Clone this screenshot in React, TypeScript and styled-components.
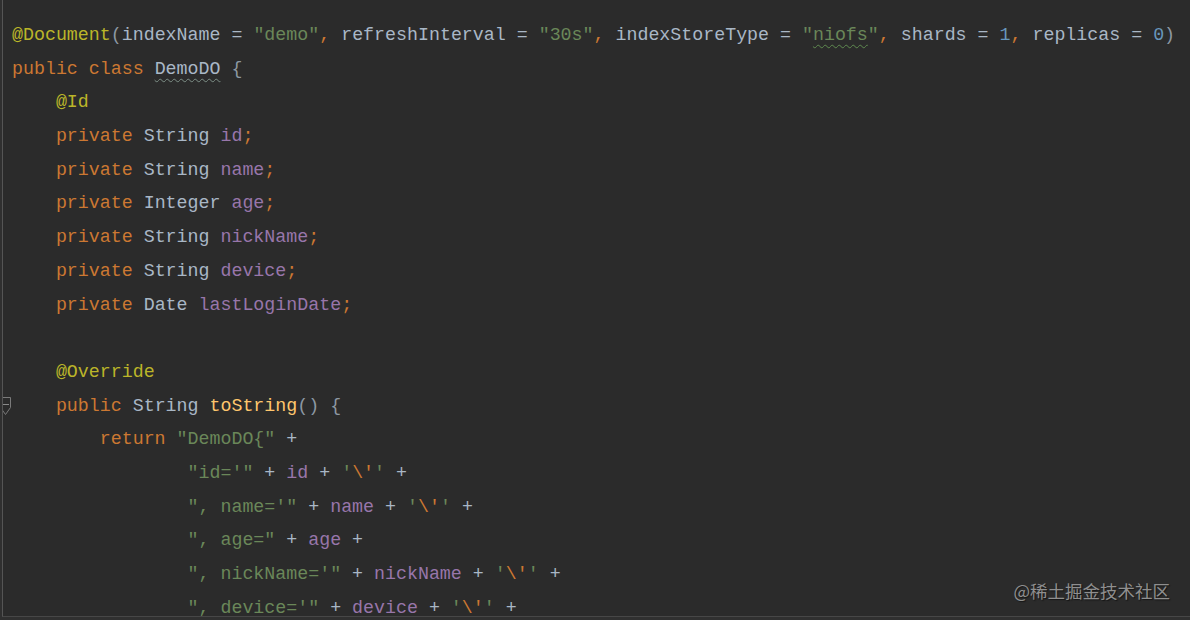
import React from "react";
import styled, { createGlobalStyle } from "styled-components";

const GlobalStyle = createGlobalStyle`
  html, body {
    margin: 0;
    padding: 0;
    background: #303030;
    overflow: hidden;
  }
`;

type Kind =
  | "plain"
  | "kw"
  | "ann"
  | "str"
  | "field"
  | "num"
  | "method"
  | "punct"
  | "dim";

const colors: Record<Kind, string> = {
  plain: "#a9b7c6",
  kw: "#cc7832",
  ann: "#bbb529",
  str: "#6a8759",
  field: "#9876aa",
  num: "#6897bb",
  method: "#ffc66d",
  punct: "#cc7832",
  dim: "#8d98a3",
};

const Page = styled.div`
  width: 1190px;
  height: 620px;
  background: #303030;
  position: relative;
`;

const Editor = styled.div`
  margin-left: 2px;
  height: 617px;
  border-left: 1px solid #555555;
  border-bottom: 1px solid #474747;
  background: #2b2b2b;
  overflow: hidden;
  padding: 19px 0 0 9px;
  box-sizing: border-box;
`;

const Line = styled.div`
  position: relative;
  height: 33.7px;
  line-height: 33.7px;
  white-space: pre;
  font-family: "Liberation Mono", monospace;
  font-size: 18.3px;
  color: #a9b7c6;
`;

const Token = styled.span<{ $kind: Kind; $squiggle?: string }>`
  color: ${(p) => colors[p.$kind]};
  ${(p) =>
    p.$squiggle
      ? `text-decoration: underline wavy ${p.$squiggle}; text-decoration-thickness: 1px; text-underline-offset: 4px;`
      : ""}
`;

const FoldMarker = styled.svg`
  position: absolute;
  left: -12px;
  top: 6px;
  width: 12px;
  height: 21px;
`;

const Watermark = styled.div`
  position: absolute;
  right: 20px;
  bottom: 17px;
  font-family: "Noto Sans CJK SC", "Noto Sans", sans-serif;
  font-size: 17.5px;
  color: #8f8f8f;
  text-shadow: 1px 1px 1px #151515;
`;

type Tok = [Kind, string, string?];

const I4 = "    ";
const I8 = "        ";
const I16 = "                ";

const lines: Tok[][] = [
  [
    ["ann", "@Document"],
    ["dim", "("],
    ["plain", "indexName = "],
    ["str", "\"demo\""],
    ["punct", ", "],
    ["plain", "refreshInterval = "],
    ["str", "\"30s\""],
    ["punct", ", "],
    ["plain", "indexStoreType = "],
    ["str", "\""],
    ["str", "niofs", "#5f8a4f"],
    ["str", "\""],
    ["punct", ", "],
    ["plain", "shards = "],
    ["num", "1"],
    ["punct", ", "],
    ["plain", "replicas = "],
    ["num", "0"],
    ["dim", ")"],
  ],
  [
    ["kw", "public class "],
    ["plain", "DemoDO", "#7d8f86"],
    ["plain", " "],
    ["dim", "{"],
  ],
  [["plain", I4], ["ann", "@Id"]],
  [["plain", I4], ["kw", "private "], ["plain", "String "], ["field", "id"], ["punct", ";"]],
  [["plain", I4], ["kw", "private "], ["plain", "String "], ["field", "name"], ["punct", ";"]],
  [["plain", I4], ["kw", "private "], ["plain", "Integer "], ["field", "age"], ["punct", ";"]],
  [["plain", I4], ["kw", "private "], ["plain", "String "], ["field", "nickName"], ["punct", ";"]],
  [["plain", I4], ["kw", "private "], ["plain", "String "], ["field", "device"], ["punct", ";"]],
  [["plain", I4], ["kw", "private "], ["plain", "Date "], ["field", "lastLoginDate"], ["punct", ";"]],
  [["plain", " "]],
  [["plain", I4], ["ann", "@Override"]],
  [
    ["plain", I4],
    ["kw", "public "],
    ["plain", "String "],
    ["method", "toString"],
    ["dim", "() {"],
  ],
  [["plain", I8], ["kw", "return "], ["str", "\"DemoDO{\""], ["plain", " +"]],
  [
    ["plain", I16],
    ["str", "\"id='\""],
    ["plain", " + "],
    ["field", "id"],
    ["plain", " + "],
    ["str", "'"],
    ["kw", "\\'"],
    ["str", "'"],
    ["plain", " +"],
  ],
  [
    ["plain", I16],
    ["str", "\", name='\""],
    ["plain", " + "],
    ["field", "name"],
    ["plain", " + "],
    ["str", "'"],
    ["kw", "\\'"],
    ["str", "'"],
    ["plain", " +"],
  ],
  [
    ["plain", I16],
    ["str", "\", age=\""],
    ["plain", " + "],
    ["field", "age"],
    ["plain", " +"],
  ],
  [
    ["plain", I16],
    ["str", "\", nickName='\""],
    ["plain", " + "],
    ["field", "nickName"],
    ["plain", " + "],
    ["str", "'"],
    ["kw", "\\'"],
    ["str", "'"],
    ["plain", " +"],
  ],
  [
    ["plain", I16],
    ["str", "\", device='\""],
    ["plain", " + "],
    ["field", "device"],
    ["plain", " + "],
    ["str", "'"],
    ["kw", "\\'"],
    ["str", "'"],
    ["plain", " +"],
  ],
];

export default function App() {
  return (
    <>
      <GlobalStyle />
      <Page>
        <Editor>
          {lines.map((toks, i) => (
            <Line key={i}>
              {i === 11 && (
                <FoldMarker viewBox="0 0 12 21">
                  <path
                    d="M0.5 1.5 H10.5 V11.5 L5.5 18.5 L0.5 11.5 Z"
                    fill="#2b2b2b"
                    stroke="#7a7a7a"
                    strokeWidth="1"
                  />
                  <path d="M2 8.5 H9" stroke="#8a8a8a" strokeWidth="1" />
                </FoldMarker>
              )}
              {toks.map(([k, t, sq], j) => (
                <Token key={j} $kind={k} $squiggle={sq}>
                  {t}
                </Token>
              ))}
            </Line>
          ))}
        </Editor>
        <Watermark>@稀土掘金技术社区</Watermark>
      </Page>
    </>
  );
}
